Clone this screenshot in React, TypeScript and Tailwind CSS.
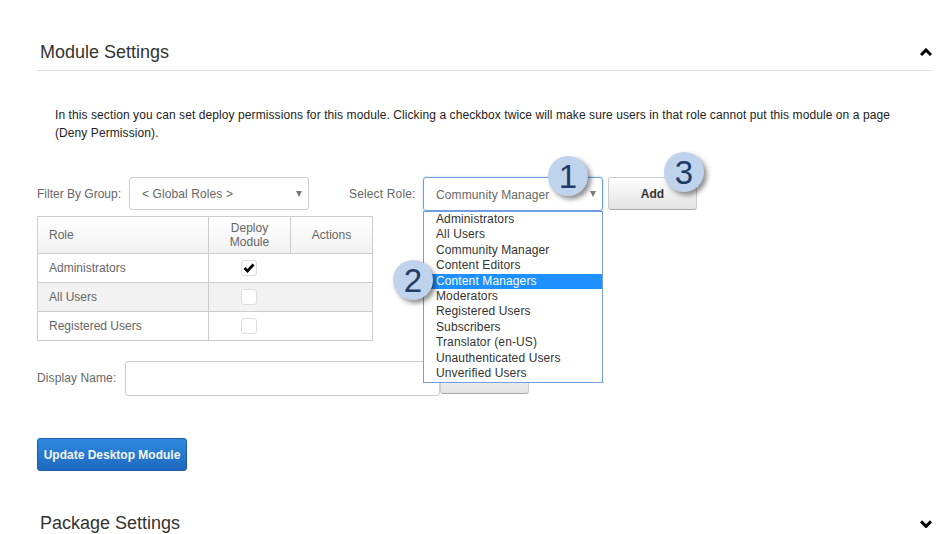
import React from 'react';

const roles = [
  'Administrators',
  'All Users',
  'Community Manager',
  'Content Editors',
  'Content Managers',
  'Moderators',
  'Registered Users',
  'Subscribers',
  'Translator (en-US)',
  'Unauthenticated Users',
  'Unverified Users',
];

const rows = [
  { name: 'Administrators', checked: true, shaded: false },
  { name: 'All Users', checked: false, shaded: true },
  { name: 'Registered Users', checked: false, shaded: false },
];

const Chevron = ({ up }: { up?: boolean }) => (
  <svg width="12" height="8" viewBox="0 0 12 8" className="block">
    <path d={up ? 'M1 7 L6 2 L11 7' : 'M1 1.4 L6 6.4 L11 1.4'} fill="none" stroke="#000" strokeWidth="3" />
  </svg>
);

const Caret = () => (
  <svg width="6" height="6" viewBox="0 0 6 6" className="absolute right-[6px] top-[13px]">
    <path d="M0 0 H6 L3 6 Z" fill="#777" />
  </svg>
);

// numbered callouts drawn over the form
const Callout = ({ n, className }: { n: number; className: string }) => (
  <div
    className={`absolute flex h-[40px] w-[40px] items-center justify-center rounded-full bg-[#c0d3ec] text-[33px] leading-none text-[#1f3c68] shadow-[3px_3px_5px_rgba(0,0,0,0.45)] ${className}`}
  >
    {n}
  </div>
);

export default function App() {
  return (
    <div className="relative h-[534px] w-[943px] overflow-hidden bg-white font-['Liberation_Sans',Arial,sans-serif] text-[12px] text-[#666]">
      <div className="pl-[37px] pr-[11px] pt-[41px]">
        <div className="flex h-[30px] items-start justify-between border-b border-[#ddd] pl-[3px]">
          <h2 className="pt-[1px] text-[18px] leading-[21px] text-[#333]">Module Settings</h2>
          <div className="mt-[7px]"><Chevron up /></div>
        </div>

        <p className="mt-[35px] pl-[18px] pr-[30px] leading-[18px] tracking-[0.085px] text-[#222]">
          In this section you can set deploy permissions for this module. Clicking a checkbox twice will make sure users in that role cannot put this module on a page (Deny Permission).
        </p>

        <div className="mt-[35px] flex items-start">
          <span className="w-[92px] pt-[8px]">Filter By Group:</span>
          <div className="relative h-[33px] w-[180px] rounded-[3px] border border-[#ccc] pl-[12px] pt-[7px] tracking-[0.1px]">
            &lt; Global Roles &gt;
            <Caret />
          </div>
          <span className="ml-[40px] w-[74px] pt-[8px] tracking-[0.15px]">Select Role:</span>
          <div className="relative h-[34px] w-[180px] rounded-[3px] border border-[#6f9fe0] pl-[12px] pt-[8px] tracking-[0.12px] shadow-[0_0_2px_rgba(82,168,236,0.6)]">
            Community Manager
            <Caret />
            {/* open list */}
            <div className="absolute left-[-1px] top-[33px] z-10 w-[180px] border border-[#6f9fe0] bg-white pb-[1px] text-[#333]">
              {roles.map((r) => (
                <div
                  key={r}
                  className={`h-[15.4px] pl-[12px] leading-[15px] ${r === 'Content Managers' ? 'bg-[#1e90ff] text-white' : ''}`}
                >
                  {r}
                </div>
              ))}
            </div>
          </div>
          <button className="ml-[5px] h-[33px] w-[89px] rounded-[3px] border border-[#ccc] border-b-[#aaa] bg-gradient-to-b from-white to-[#e2e2e2] font-bold text-[#333]">
            Add
          </button>
        </div>

        <table className="mt-[5px] w-[336px] table-fixed border-collapse">
          <thead>
            <tr className="h-[37px] bg-gradient-to-b from-white to-[#f1f1f1] leading-[14px]">
              <th className="w-[171px] border border-[#ccc] pl-[11px] text-left font-normal">Role</th>
              <th className="w-[82px] border border-[#ccc] font-normal">Deploy<br />Module</th>
              <th className="border border-[#ccc] font-normal">Actions</th>
            </tr>
          </thead>
          <tbody>
            {rows.map((row) => (
              <tr key={row.name} className={`h-[29px] ${row.shaded ? 'bg-[#f2f2f2]' : 'bg-white'}`}>
                <td className="border border-[#ccc] pl-[11px]">{row.name}</td>
                <td colSpan={2} className="border border-[#ccc] pl-[32px]">
                  <div className="flex h-[16px] w-[16px] items-center justify-center rounded-[3px] border border-[#ddd] bg-white">
                    {row.checked && (
                      <svg width="12" height="10" viewBox="0 0 12 10">
                        <path d="M1.5 5 L4.5 8 L10.5 1.5" fill="none" stroke="#000" strokeWidth="2.6" />
                      </svg>
                    )}
                  </div>
                </td>
              </tr>
            ))}
          </tbody>
        </table>

        <div className="mt-[20px] flex items-start">
          <span className="w-[88px] pt-[8px] tracking-[0.1px]">Display Name:</span>
          <div className="h-[35px] w-[315px] rounded-[3px] border border-[#ccc] bg-white" />
          <div className="h-[33px] w-[89px] rounded-[3px] border border-[#ccc] border-b-[#aaa] bg-gradient-to-b from-white to-[#e2e2e2]" />
        </div>

        <button className="mt-[42px] block h-[33px] w-[150px] rounded-[3px] border border-[#1a5ea8] bg-gradient-to-b from-[#2f8ae0] to-[#1f68bf] text-center font-bold text-[#f2f6fb]">
          Update Desktop Module
        </button>

        <div className="mt-[42px] flex items-start justify-between pl-[3px]">
          <h2 className="text-[18px] leading-[21px] text-[#333]">Package Settings</h2>
          <div className="mt-[7px]"><Chevron /></div>
        </div>
      </div>

      <Callout n={1} className="left-[548px] top-[156px] z-20" />
      <Callout n={2} className="left-[393px] top-[260px] z-20" />
      <Callout n={3} className="left-[664px] top-[152px] z-20" />
    </div>
  );
}
